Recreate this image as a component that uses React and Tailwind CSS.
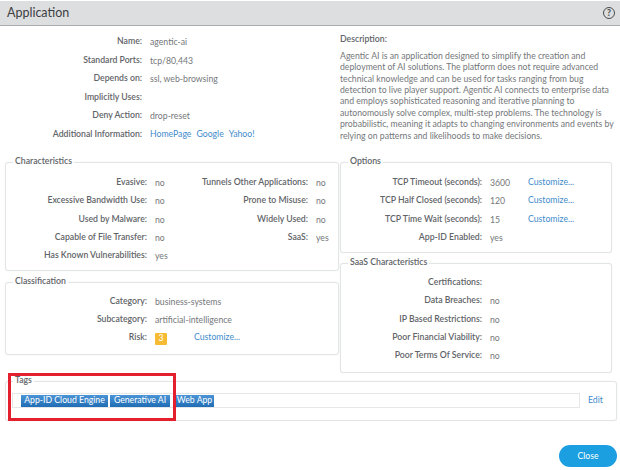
import React from "react";

function Box({ title, className = "", children }) {
  return (
    <fieldset className={`border border-[#e3e4e5] rounded-[3px] shadow-[0_0_1px_#d8d9da] ${className}`}>
      <legend className="ml-[7px] px-[2px] h-[12px] leading-[9px] text-[8.7px] font-semibold text-[#5f6468]">
        {title}
      </legend>
      {children}
    </fieldset>
  );
}

function Row({ label, w = "w-[141px]", h = "h-[18.4px]", children }) {
  return (
    <div className={`flex items-center ${h}`}>
      <div className={`${w} shrink-0 text-right font-semibold text-[#5f6468]`}>{label}:</div>
      <div className="ml-[8px] pt-[2px] flex items-center text-[#74777a]">{children}</div>
    </div>
  );
}

function Link({ children, className = "" }) {
  return <span className={`-mt-[2px] text-[#3f8ccb] ${className}`}>{children}</span>;
}

function Tag({ children, className = "" }) {
  return (
    <span className={`h-[12px] flex items-center justify-center whitespace-nowrap bg-gradient-to-b from-[#4a94d6] to-[#1f6db5] text-white text-[8.7px] ${className}`}>
      {children}
    </span>
  );
}

export default function App() {
  return (
    <div className="w-[620px] h-[470px] bg-white overflow-hidden flex flex-col text-[8.7px] leading-none font-['Lato','Noto_Sans',sans-serif] relative">
      {/* header */}
      <div className="h-[25px] mt-[1px] bg-[#dcdedf] border-b border-[#a9abad] flex items-center justify-between pl-[7px] pr-[5px]">
        <span className="text-[12.5px] text-[#3c4043]">Application</span>
        <span className="w-[12px] h-[12px] rounded-full border-[1.5px] border-[#4a4d50] flex items-center justify-center text-[8.5px] font-black text-[#4a4d50]">?</span>
      </div>

      <div className="px-[5px] grid grid-cols-[334px_272px] gap-x-[1px]">
        {/* left column */}
        <div className="flex flex-col">
          <div className="h-[130px] pt-[6px]">
            {[
              ["Name", "agentic-ai"],
              ["Standard Ports", "tcp/80,443"],
              ["Depends on", "ssl, web-browsing"],
              ["Implicitly Uses", ""],
              ["Deny Action", "drop-reset"],
            ].map(([k, v]) => (
              <Row key={k} label={k} w="w-[137px]" h="h-[18.6px]">{v}</Row>
            ))}
            <Row label="Additional Information" w="w-[137px]" h="h-[18.6px]">
              <span className="flex gap-[5px]">
                <Link>HomePage</Link>
                <Link>Google</Link>
                <Link>Yahoo!</Link>
              </span>
            </Row>
          </div>

          <Box title="Characteristics" className="h-[115px]">
            <div className="flex pt-[5px]">
              <div className="w-[162px]">
                <Row label="Evasive">no</Row>
                <Row label="Excessive Bandwidth Use">no</Row>
                <Row label="Used by Malware">no</Row>
                <Row label="Capable of File Transfer">no</Row>
                <Row label="Has Known Vulnerabilities">yes</Row>
              </div>
              <div>
                <Row label="Tunnels Other Applications" w="w-[140px]">no</Row>
                <Row label="Prone to Misuse" w="w-[140px]">no</Row>
                <Row label="Widely Used" w="w-[140px]">no</Row>
                <Row label="SaaS" w="w-[140px]">yes</Row>
              </div>
            </div>
          </Box>

          <Box title="Classification" className="h-[79px] mt-[5px]">
            <div className="pt-[4px]">
              <Row label="Category">business-systems</Row>
              <Row label="Subcategory">artificial-intelligence</Row>
              <Row label="Risk" h="h-[18px]">
                <span className="w-[12px] h-[12px] rounded-[1px] bg-[#f6bb35] text-white flex items-center justify-center">3</span>
                <Link className="ml-[27px]">Customize...</Link>
              </Row>
            </div>
          </Box>
        </div>

        {/* right column */}
        <div className="flex flex-col">
          <div className="h-[130px] pt-[9px] text-[#74777a]">
            <div className="font-semibold text-[#5f6468]">Description:</div>
            <p className="mt-[6px] leading-[11.4px] whitespace-nowrap">
              Agentic AI is an application designed to simplify the creation and<br />
              deployment of AI solutions. The platform does not require advanced<br />
              technical knowledge and can be used for tasks ranging from bug<br />
              detection to live player support. Agentic AI connects to enterprise data<br />
              and employs sophisticated reasoning and iterative planning to<br />
              autonomously solve complex, multi-step problems. The technology is<br />
              probabilistic, meaning it adapts to changing environments and events by<br />
              relying on patterns and likelihoods to make decisions.
            </p>
          </div>

          <Box title="Options" className="h-[97px]">
            <div className="pt-[5px]">
              {[
                ["TCP Timeout (seconds)", "3600"],
                ["TCP Half Closed (seconds)", "120"],
                ["TCP Time Wait (seconds)", "15"],
              ].map(([k, v]) => (
                <Row key={k} label={k}>
                  <span className="w-[38px]">{v}</span>
                  <Link>Customize...</Link>
                </Row>
              ))}
              <Row label="App-ID Enabled">yes</Row>
            </div>
          </Box>

          <Box title="SaaS Characteristics" className="h-[116px] mt-[4px]">
            <div className="pt-[4px]">
              <Row label="Certifications"></Row>
              <Row label="Data Breaches">no</Row>
              <Row label="IP Based Restrictions">no</Row>
              <Row label="Poor Financial Viability">no</Row>
              <Row label="Poor Terms Of Service">no</Row>
            </div>
          </Box>
        </div>
      </div>

      {/* tags */}
      <Box title="Tags" className="mx-[5px] w-[612px] h-[46px] mt-[2px]">
        <div className="flex items-center mt-[6px] ml-[6px]">
          <div className="w-[568px] h-[15px] border border-[#e6e7e8] flex items-center pl-[8px]">
            <Tag className="w-[87px]">App-ID Cloud Engine</Tag>
            <Tag className="w-[60px] ml-[2px]">Generative AI</Tag>
            <Tag className="w-[39px] ml-[5px]">Web App</Tag>
          </div>
          <span className="ml-[8px] text-[#3f8ccb]">Edit</span>
        </div>
      </Box>

      {/* footer */}
      <div className="flex justify-end pr-[3px] mt-[24px]">
        <button className="w-[58px] h-[22px] rounded-full bg-[#1c9fe0] text-white text-[8.7px]">Close</button>
      </div>

      {/* red highlight drawn over the screenshot */}
      <div className="absolute left-[8px] top-[373px] w-[168px] h-[48px] border-[3px] border-[#e5202e]"></div>
    </div>
  );
}
